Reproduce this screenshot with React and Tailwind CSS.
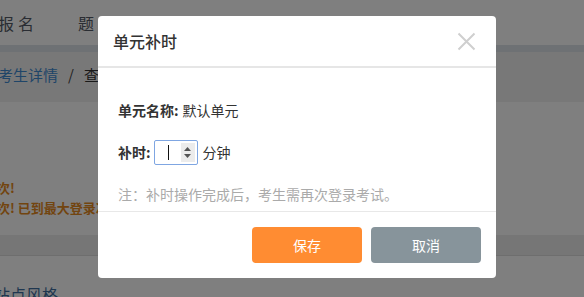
import React from 'react'

const font = { fontFamily: '"Noto Sans CJK SC", "Noto Sans", sans-serif' }

export default function App() {
  return (
    <div className="relative w-[584px] h-[297px] overflow-hidden bg-white" style={font}>
      {/* page underneath */}
      <div className="flex flex-col">
        <nav className="h-[45px] flex items-center text-[16px] text-[#555b66]">
          <span className="tracking-[4px] -ml-[2px]">报名</span>
          <span className="tracking-[4px] ml-[40px]">题库</span>
          <span className="tracking-[4px] ml-[40px]">组卷</span>
        </nav>
        <div className="h-[7px] bg-[#dde2e8]" />
        <div className="h-[50px] bg-[#f1f1f1] flex items-center text-[15px] pb-[4px]">
          <span className="text-[#3f8ad0] -ml-[2px]">考生详情</span>
          <span className="text-[#444] mx-[10px]">/</span>
          <span className="text-[#333]">查看</span>
        </div>
        <div className="h-[133px] pt-[76px] pl-0 text-[13px] font-bold text-[#e58a1f] leading-[20px]">
          <div className="-ml-[3px]">次!</div>
          <div className="-ml-[3px]">次! 已到最大登录次数</div>
        </div>
        <div className="h-[21px] bg-[#ececec] border-b border-[#dcdcdc]" />
        <div className="pt-[26px] text-[16px] text-[#3f6fa0] -ml-[6px]">站点风格</div>
      </div>

      {/* overlay */}
      <div className="absolute inset-0 bg-black/50" />

      {/* modal */}
      <div className="absolute left-[98px] top-[16px] w-[398px] h-[262px] bg-white rounded-[4px] flex flex-col">
        <div className="h-[52px] flex items-center justify-between pl-[15px] pr-[20px] border-b-2 border-[#e6e6e6]">
          <span className="text-[16px] text-[#333] font-medium">单元补时</span>
          <svg width="19" height="19" viewBox="0 0 19 19">
            <path d="M1.5 1.5 L17.5 17.5 M17.5 1.5 L1.5 17.5" stroke="#cfcfcf" strokeWidth="2" />
          </svg>
        </div>
        <div className="flex-1 pl-[20px] pt-[32px] text-[14px] text-[#333] border-b border-[#e8e8e8]">
          <div className="h-[20px] flex items-center">
            <span className="font-bold">单元名称:</span>
            <span className="ml-[4px]">默认单元</span>
          </div>
          <div className="mt-[20px] h-[25px] flex items-center">
            <span className="font-bold">补时:</span>
            <div className="ml-[3px] w-[44px] h-[25px] border border-[#7fa6e2] rounded-[2px] flex items-center">
              <div className="flex-1 flex items-center pl-[13px]">
                <div className="w-[1px] h-[15px] bg-[#111]" />
              </div>
              <div className="w-[14px] h-[19px] mr-[2px] bg-[#ececec] flex flex-col items-center justify-center gap-[3px]">
                <svg width="7" height="4" viewBox="0 0 7 4"><path d="M0 4 L3.5 0 L7 4 Z" fill="#555" /></svg>
                <svg width="7" height="4" viewBox="0 0 7 4"><path d="M0 0 L7 0 L3.5 4 Z" fill="#555" /></svg>
              </div>
            </div>
            <span className="ml-[5px]">分钟</span>
          </div>
          <div className="mt-[19px] h-[20px] flex items-center text-[#aaa]">
            注：补时操作完成后，考生需再次登录考试。
          </div>
        </div>
        <div className="h-[66px] flex justify-end items-start pt-[15px] pr-[15px] gap-[9px]">
          <button className="w-[110px] h-[36px] rounded-[4px] bg-[#ff8c32] text-white text-[14px]">保存</button>
          <button className="w-[110px] h-[36px] rounded-[4px] bg-[#87949b] text-white text-[14px]">取消</button>
        </div>
      </div>
    </div>
  )
}
